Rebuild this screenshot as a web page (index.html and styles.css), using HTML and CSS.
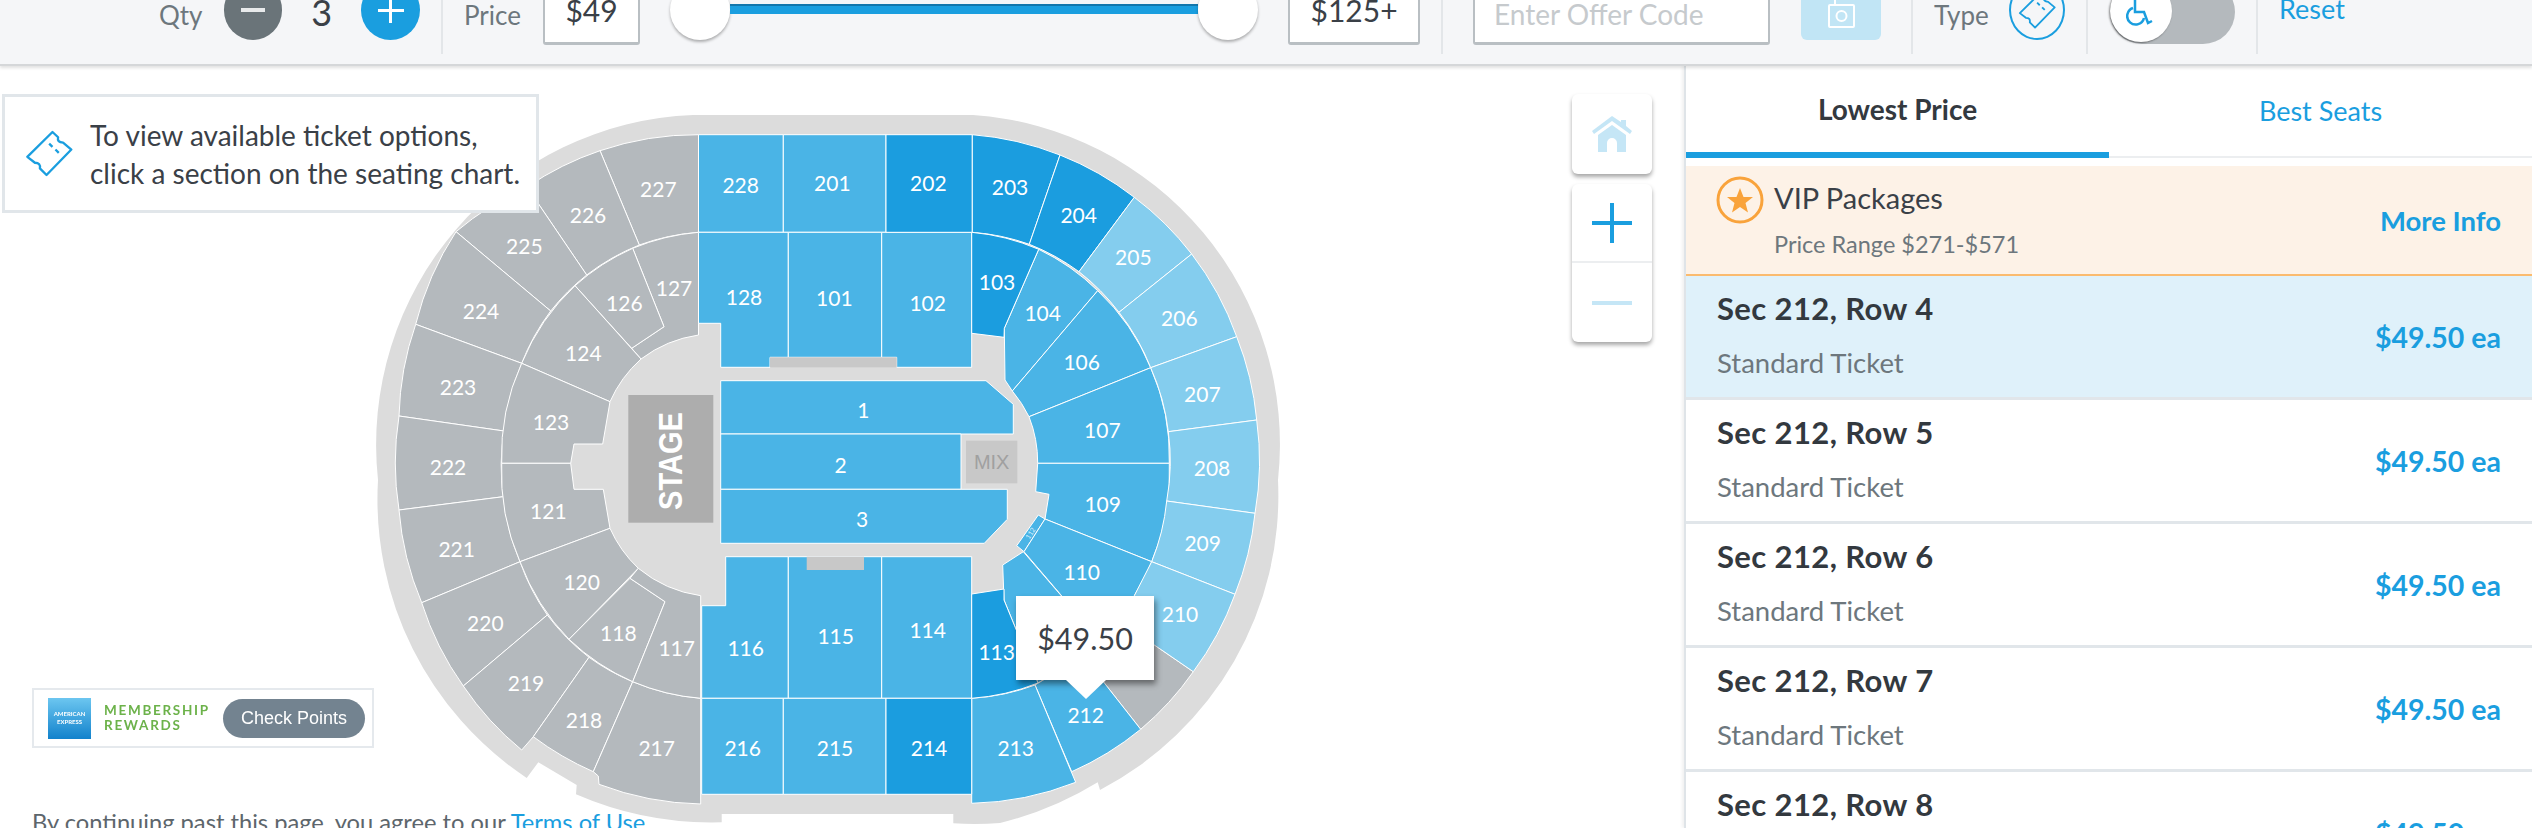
FILE: index.html
```html
<!DOCTYPE html>
<html lang="en">
<head>
	<meta charset="UTF-8" />
	<title>Seat map</title>
	<link rel="stylesheet" href="styles.css">
</head>
<body>
<header class="filters">
	<div class="group group-qty">
		<span class="label">Qty</span>
		<span class="round round-minus"><span class="bar"></span></span>
		<span class="qty-value">3</span>
		<span class="round round-plus"><span class="cross"></span></span>
	</div>
	<div class="group group-price">
		<span class="label">Price</span>
		<span class="field field-min">$49</span>
		<div class="slider">
			<span class="handle"></span>
			<span class="track"></span>
			<span class="handle"></span>
		</div>
		<span class="field field-max">$125+</span>
	</div>
	<div class="group group-offer">
		<span class="field field-offer">Enter Offer Code</span>
		<span class="offer-btn">
			<svg width="32" height="30" viewBox="0 0 32 30"><path class="offer-line" d="M10 0V5M5 5H28A1 1 0 0 1 29 6V26A1 1 0 0 1 28 27H5A1 1 0 0 1 4 26V6A1 1 0 0 1 5 5Z"/><circle class="offer-line" cx="16.500" cy="16" r="5"/></svg>
		</span>
	</div>
	<div class="group group-type">
		<span class="label">Type</span>
		<span class="type-icon">
			<svg width="38" height="37" viewBox="20 20 145 140"><use href="#ticket"/></svg>
		</span>
	</div>
	<div class="group group-access">
		<div class="toggle">
			<span class="knob">
				<svg width="30" height="32" viewBox="0 0 30 32"><path class="wheel" d="M9 2V17H18L22 28L26 26M7 13A8.500 8.500 0 1 0 18 23"/></svg>
			</span>
		</div>
	</div>
	<a class="reset">Reset</a>
</header>

<main class="main">
	<section class="map">
		<svg class="seatmap" width="1684" height="762" viewBox="0 66 1684 762">
			<defs>
				<g id="ticket">
					<path class="ticket-line" d="M103 25L120 41Q116 56 135 57L160 78L85 155L65 135Q68 118 50 118L27 100Z"/>
					<path class="ticket-line" d="M93 60L103 70M112 78L122 88"/>
				</g>
			</defs>
			<path class="band" d="M693 115H973A330 330 0 0 1 1278 480A332 332 0 0 1 1100 790L1097.700 782.300A340 340 0 0 1 1000 823A340 340 0 0 1 953.300 823.300V814H721.700V822.300A340 340 0 0 1 576 794.300L576.700 785L538.300 762.300L526.700 778A335 335 0 0 1 378 480A330 330 0 0 1 693 115Z"/>

			<g class="grey">
				<path d="M698.500 134.700A300 300 0 0 0 600 150.700L639.300 245A220 220 0 0 1 698.500 232.300Z"/>
				<path d="M600 150.700A300 300 0 0 0 527 187L586.700 275A220 220 0 0 1 639.300 245Z"/>
				<path d="M527 187A300 300 0 0 0 456 231.700L550.700 311A220 220 0 0 1 586.700 275Z"/>
				<path d="M456 231.700A300 300 0 0 0 415.700 324.300L521.700 363.300A220 220 0 0 1 550.700 311Z"/>
				<path d="M415.700 324.300A300 300 0 0 0 399 416L504 431A220 220 0 0 1 521.700 363.300Z"/>
				<path d="M399 416A300 300 0 0 0 399 510L503.300 496.700A220 220 0 0 1 504 431Z"/>
				<path d="M399 510A300 300 0 0 0 421.700 602.700L520 561.700A220 220 0 0 1 503.300 496.700Z"/>
				<path d="M421.700 602.700A300 300 0 0 0 463.300 686L547.300 615A220 220 0 0 1 520 561.700Z"/>
				<path d="M463.300 686A300 300 0 0 0 521.700 750L533.300 736.700L589 657.300A220 220 0 0 1 547.300 615Z"/>
				<path d="M533.300 736.700A300 300 0 0 0 593.300 771.700L632.700 681.700A220 220 0 0 1 589 657.300Z"/>
				<path d="M593.300 771.700L598.300 776L599 784.300A300 300 0 0 0 700.700 804V698.300A220 220 0 0 1 632.700 681.700Z"/>
				<path d="M698.500 232.300A220 220 0 0 0 632.700 248.300L664 326.700L631.700 348.300L641 359A125 125 0 0 1 698.500 335Z"/>
				<path d="M632.700 248.300A220 220 0 0 0 575 285.700L631.700 348.300L664 326.700Z"/>
				<path d="M575 285.700A220 220 0 0 0 521.700 363.300L610 401.700A125 125 0 0 1 641 359Z"/>
				<path d="M521.700 363.300A220 220 0 0 0 501.700 463.300H570.700L574 444H602.700L610 401.700Z"/>
				<path d="M501.700 463.300A220 220 0 0 0 520 561.700L610 528.300L603.300 489.300H574L570.700 463.300Z"/>
				<path d="M520 561.700A220 220 0 0 0 569 639.300L638.300 568.300A125 125 0 0 1 610 528.300Z"/>
				<path d="M569 639.300A220 220 0 0 0 632.700 681.700L665 601.700L630 578.300Z"/>
				<path d="M632.700 681.700A220 220 0 0 0 700.700 698.300V595.700A125 125 0 0 1 638.300 568.300L630 578.300L665 601.700Z"/>
				<path d="M1193.300 671.700A300 300 0 0 1 1140.700 729.300L1080 652A125 125 0 0 0 1115 618Z"/>
			</g>

			<g class="mid">
				<path d="M698.500 134.700H783.300V232.300H698.500Z"/>
				<path d="M783.300 134.700H886V232.300H783.300Z"/>
				<path d="M698.500 232.300H788.300V357.300H770V367.300H720.700V323.300H698.500Z"/>
				<path d="M788.300 232.300H881.700V357.300H788.300Z"/>
				<path d="M881.700 232.300H971.700V367.300H896.700V357.300H881.700Z"/>
				<path d="M1038.700 249.300A220 220 0 0 1 1097.700 290.700L1012.300 391L1005 380L1004.300 328.300Z"/>
				<path d="M1097.700 290.700A220 220 0 0 1 1150.700 367.700L1029 416.700A125 125 0 0 0 1012.300 391Z"/>
				<path d="M1150.700 367.700A220 220 0 0 1 1169.300 463.300H1037.700A125 125 0 0 0 1029 416.700Z"/>
				<path d="M1037.700 463.300H1169.300A220 220 0 0 1 1151.700 561.700L1045 519L1049 494.300L1035.700 491.700Z"/>
				<path class="tiny" d="M1038.300 515L1045 519L1024 551.700L1016.700 545.700Z"/>
				<path d="M1045 519L1151.700 561.700A220 220 0 0 1 1134.300 595.700L1096 636L1024 551.700Z"/>
				<path d="M1023.300 551.700L1096 636A220 220 0 0 1 1038 683L1004 600L1002.700 565Z"/>
				<path d="M1140.700 729.300A300 300 0 0 1 1071.700 771.700L1035 685A220 220 0 0 0 1080 652Z"/>
				<path d="M971.700 698.300A220 220 0 0 0 1035 685L1075.700 782.300A300 300 0 0 1 971.700 803.300Z"/>
				<path d="M725.700 556.700H788.300V698.300H701.700V605.700H725.700Z"/>
				<path d="M788.300 556.700H881.700V698.300H788.300Z"/>
				<path d="M881.700 556.700H971.700V698.300H881.700Z"/>
				<path d="M701.700 698.300H783.300V794.300H701.700Z"/>
				<path d="M783.300 698.300H886V794.300H783.300Z"/>
				<path d="M720.700 380.700H986L1013.300 404.300V434H720.700Z"/>
				<path d="M720.700 434H961V489.300H720.700Z"/>
				<path d="M720.700 489.300H1007.300V519.300L984.300 543.300H720.700Z"/>
			</g>

			<g class="dark">
				<path d="M886 134.700H972.300V232.300H886Z"/>
				<path d="M972.300 134.700A300 300 0 0 1 1060 155L1029.300 244.300A220 220 0 0 0 972.300 232.300Z"/>
				<path d="M1060 155A300 300 0 0 1 1134.300 197.300L1079 271.700A220 220 0 0 0 1029.300 244.300Z"/>
				<path d="M971.700 232.300A220 220 0 0 1 1038.700 249.300L1004.300 328.300L1004 337.300L971.700 333.300Z"/>
				<path d="M971.700 594L1004 589V600L1038 683A220 220 0 0 1 971.700 698.300Z"/>
				<path d="M886 698.300H971.700V794.300H886Z"/>
			</g>

			<g class="light">
				<path d="M1134.300 197.300A300 300 0 0 1 1191.700 254L1119 312.300A220 220 0 0 0 1079 271.700Z"/>
				<path d="M1191.700 254A300 300 0 0 1 1236.700 336.700L1150.700 367.700A220 220 0 0 0 1119 312.300Z"/>
				<path d="M1236.700 336.700A300 300 0 0 1 1256.700 420L1168.300 431.700A220 220 0 0 0 1150.700 367.700Z"/>
				<path d="M1256.700 420A300 300 0 0 1 1255 513.300L1166.700 501A220 220 0 0 0 1168.300 431.700Z"/>
				<path d="M1255 513.300A300 300 0 0 1 1235 594.300L1151.700 561.700A220 220 0 0 0 1166.700 501Z"/>
				<path d="M1235 594.300A300 300 0 0 1 1193.300 671.700L1115 618L1134.300 595.700L1151.700 561.700Z"/>
			</g>

			<rect class="block" x="770" y="357.300" width="126.700" height="10"/>
			<rect class="block" x="806.700" y="556.700" width="57.300" height="13.300"/>
			<rect class="block" x="966" y="440.700" width="51.300" height="42.600"/>
			<rect class="stage" x="628.300" y="395" width="85" height="127.700"/>
			<text class="stage-name" transform="translate(682 461) rotate(-90)" textLength="98" lengthAdjust="spacingAndGlyphs">STAGE</text>
			<text class="mix-name" x="991.700" y="462">MIX</text>

			<g class="names">
				<text x="658.300" y="188.300">227</text>
				<text x="740.700" y="184">228</text>
				<text x="588" y="214.300">226</text>
				<text x="524.300" y="245.300">225</text>
				<text x="481" y="310">224</text>
				<text x="458" y="386">223</text>
				<text x="448" y="466.700">222</text>
				<text x="674" y="287.300">127</text>
				<text x="624.300" y="302">126</text>
				<text x="583.300" y="352">124</text>
				<text x="551" y="421">123</text>
				<text x="744" y="296.700">128</text>
				<text x="548.300" y="510">121</text>
				<text x="456.700" y="548.300">221</text>
				<text x="581.700" y="581">120</text>
				<text x="485.300" y="622.700">220</text>
				<text x="618.300" y="632">118</text>
				<text x="676.700" y="647.300">117</text>
				<text x="745.700" y="647.300">116</text>
				<text x="526" y="682.700">219</text>
				<text x="584" y="719.300">218</text>
				<text x="656.700" y="747.700">217</text>
				<text x="742.700" y="747.700">216</text>
				<text x="832.300" y="182.300">201</text>
				<text x="928.300" y="182.300">202</text>
				<text x="1010" y="186">203</text>
				<text x="1078.700" y="214.300">204</text>
				<text x="1133.300" y="256">205</text>
				<text x="1179.300" y="317.300">206</text>
				<text x="1202.300" y="393.300">207</text>
				<text x="1212" y="467.700">208</text>
				<text x="834.300" y="297.300">101</text>
				<text x="927.700" y="302">102</text>
				<text x="997" y="281">103</text>
				<text x="1042.700" y="312">104</text>
				<text x="1081.700" y="361">106</text>
				<text x="1102.300" y="429.300">107</text>
				<text x="863.300" y="409.300">1</text>
				<text x="840.700" y="464">2</text>
				<text x="862" y="518.300">3</text>
				<text x="1102.700" y="503.300">109</text>
				<text x="1202.700" y="542.700">209</text>
				<text x="1180" y="613.300">210</text>
				<text x="1081.700" y="571.700">110</text>
				<text x="996.700" y="651.700">113</text>
				<text x="927.700" y="629.300">114</text>
				<text x="835.700" y="635">115</text>
				<text x="835" y="747.700">215</text>
				<text x="929" y="747.700">214</text>
				<text x="1015.700" y="747.700">213</text>
				<text x="1085.700" y="714.300">212</text>
			</g>
			<text class="tiny-name" transform="translate(1030 533) rotate(-57)">112</text>
		</svg>

		<div class="hint">
			<svg class="hint-icon" width="48" height="47" viewBox="20 20 145 140"><use href="#ticket"/></svg>
			<p>To view available ticket options,<br>click a section on the seating chart.</p>
		</div>

		<div class="controls">
			<div class="ctrl">
				<svg width="40" height="36" viewBox="0 0 40 36"><path class="home-fill" d="M20 0L29 6V4H34V10L40 15L38 18L20 5L2 18L0 15ZM20 9L34 19V36H25V27A5 5 0 0 0 15 27V36H6V19Z"/></svg>
			</div>
			<div class="ctrl ctrl-zoom">
				<div class="zoom-cell"><span class="zoom-plus"></span></div>
				<div class="zoom-cell zoom-cell-off"><span class="zoom-minus"></span></div>
			</div>
		</div>

		<div class="price-tip">$49.50</div>

		<div class="rewards">
			<span class="amex">AMERICAN<br>EXPRESS</span>
			<span class="rewards-name">MEMBERSHIP<br>REWARDS</span>
			<span class="rewards-btn">Check Points</span>
		</div>

		<p class="terms">By continuing past this page, you agree to our <a>Terms of Use.</a></p>
	</section>

	<aside class="panel">
		<nav class="tabs">
			<a class="tab tab-active">Lowest Price</a>
			<a class="tab">Best Seats</a>
		</nav>
		<div class="vip">
			<svg class="vip-star" width="48" height="48" viewBox="0 0 48 48"><circle class="star-ring" cx="24" cy="24" r="22"/><path class="star-fill" d="M24 12L27.500 21H37L29.500 27L32 36.500L24 31L16 36.500L18.500 27L11 21H20.500Z"/></svg>
			<div class="vip-text">
				<div class="vip-title">VIP Packages</div>
				<div class="vip-range">Price Range $271-$571</div>
			</div>
			<a class="vip-more">More Info</a>
		</div>
		<div class="row row-active">
			<div class="row-info"><div class="row-title">Sec 212, Row 4</div><div class="row-sub">Standard Ticket</div></div>
			<div class="row-price">$49.50 ea</div>
		</div>
		<div class="row">
			<div class="row-info"><div class="row-title">Sec 212, Row 5</div><div class="row-sub">Standard Ticket</div></div>
			<div class="row-price">$49.50 ea</div>
		</div>
		<div class="row">
			<div class="row-info"><div class="row-title">Sec 212, Row 6</div><div class="row-sub">Standard Ticket</div></div>
			<div class="row-price">$49.50 ea</div>
		</div>
		<div class="row">
			<div class="row-info"><div class="row-title">Sec 212, Row 7</div><div class="row-sub">Standard Ticket</div></div>
			<div class="row-price">$49.50 ea</div>
		</div>
		<div class="row">
			<div class="row-info"><div class="row-title">Sec 212, Row 8</div><div class="row-sub">Standard Ticket</div></div>
			<div class="row-price">$49.50 ea</div>
		</div>
	</aside>
</main>
</body>
</html>
```

FILE: styles.css
```css
* {
	padding: 0;
	margin: 0;
	box-sizing: border-box;
}
html, body {
	width: 100%;
	height: 100%;
	overflow: hidden;
}
body {
	display: flex;
	flex-direction: column;
	background: #fff;
	color: #3a4047;
	font-family: Lato, "Open Sans", sans-serif;
}

/* top filter bar, scrolled a little past the top of the window */
.filters {
	flex: none;
	position: relative;
	z-index: 2;
	display: flex;
	align-items: flex-start;
	height: 66px;
	padding-left: 138px;
	background: #f5f6f8;
	border-bottom: 2px solid #d5d7d9;
	box-shadow: 0 2px 3px rgba(0, 0, 0, .12);
	overflow: hidden;
}
.group {
	flex: none;
	display: flex;
	align-items: center;
	height: 84px;
	margin-top: -30px;
	padding: 0 21px;
	border-right: 2px solid #e3e6e9;
}
.label {
	margin-top: 6px;
	font-size: 26px;
	color: #6d777d;
}
.round {
	display: flex;
	align-items: center;
	justify-content: center;
	width: 60px;
	height: 60px;
	margin-bottom: 4px;
	border-radius: 50%;
}
.round-minus { background: #6a7479; margin-left: 21px; }
.round-plus { background: #1a9edf; }
.bar {
	width: 24px;
	height: 4px;
	background: #e8eaeb;
}
.cross {
	width: 26px;
	height: 26px;
	background:
		linear-gradient(#fff, #fff) center / 3px 100% no-repeat,
		linear-gradient(#fff, #fff) center / 100% 3px no-repeat;
}
.qty-value {
	width: 80px;
	text-align: center;
	font-size: 36px;
}
.group-qty { width: 305px; }
.group-price { width: 1000px; }
.group-offer { width: 470px; padding-left: 30px; }
.group-type { width: 175px; }
.group-access { width: 170px; padding-left: 22px; }

.field {
	display: flex;
	align-items: center;
	justify-content: center;
	height: 60px;
	margin-top: 6px;
	padding-bottom: 10px;
	background: #fff;
	border: 2px solid #b9bfc3;
	border-bottom-width: 3px;
	border-radius: 3px;
	font-size: 30px;
	color: #3a4047;
}
.field-min { width: 98px; margin-left: 22px; }
.field-max { width: 133px; margin-left: 30px; }
.field-offer {
	width: 297px;
	justify-content: flex-start;
	padding: 0 0 2px 19px;
	color: #c6cacd;
	font-size: 28px;
}
.slider {
	display: flex;
	align-items: center;
	margin-left: 30px;
	margin-bottom: 4px;
}
.handle {
	width: 60px;
	height: 60px;
	background: #fff;
	border-radius: 50%;
	box-shadow: 0 2px 3px rgba(0, 0, 0, .3);
}
.track {
	width: 468px;
	height: 10px;
	margin-bottom: 2px;
	background: #1a9edf;
	border-top: 2px solid #1276ac;
}
.offer-btn {
	display: flex;
	align-items: flex-start;
	justify-content: center;
	width: 80px;
	height: 60px;
	margin: 0 0 4px 31px;
	padding-top: 20px;
	background: #c1e5f5;
	border-radius: 0 0 6px 6px;
}
.offer-line {
	fill: none;
	stroke: #fff;
	stroke-width: 2;
}
.type-icon {
	display: flex;
	align-items: center;
	justify-content: center;
	width: 60px;
	height: 60px;
	margin: 0 0 4px 20px;
	border: 2px solid #1a9edf;
	border-radius: 50%;
}
.toggle {
	width: 126px;
	height: 64px;
	background: #b4b9bd;
	border-radius: 32px;
}
.knob {
	display: flex;
	align-items: center;
	justify-content: center;
	width: 62px;
	height: 62px;
	background: #fff;
	border-radius: 50%;
	box-shadow: -1px 1px 2px rgba(0, 0, 0, .45);
}
.wheel {
	fill: none;
	stroke: #1a9edf;
	stroke-width: 2.500;
}
.reset {
	margin: -2px 0 0 21px;
	color: #1a9edf;
	font-size: 27px;
	line-height: 22px;
}

.main {
	flex: 1;
	display: flex;
	min-height: 0;
}

/* seat map, the svg uses page coordinates */
.map {
	position: relative;
	flex: none;
	display: flex;
	flex-direction: column;
	justify-content: flex-end;
	width: 1684px;
}
.seatmap {
	position: absolute;
	left: 0;
	top: 0;
}
.band { fill: #dcdcdc; }
.grey path, .mid path, .dark path, .light path {
	stroke: #fff;
	stroke-width: 1;
}
.grey path { fill: #b4b9bd; }
.mid path { fill: #4ab4e6; }
.dark path { fill: #1b9ddf; }
.light path { fill: #84cdee; }
.block { fill: #c8c8c8; }
.stage { fill: #adadad; }
.stage-name {
	fill: #fff;
	font: bold 33px "Liberation Sans", sans-serif;
	text-anchor: middle;
}
.mix-name {
	fill: #a0a0a0;
	font: 20px "Liberation Sans", sans-serif;
	text-anchor: middle;
	dominant-baseline: central;
}
.names text {
	fill: #fff;
	font-size: 21px;
	text-anchor: middle;
	dominant-baseline: central;
}
.tiny-name {
	fill: #d6effb;
	font-size: 7px;
	text-anchor: middle;
	dominant-baseline: central;
}
.ticket-line {
	fill: none;
	stroke: #1a9edf;
	stroke-width: 7;
	stroke-linejoin: round;
}

.hint {
	position: absolute;
	left: 2px;
	top: 28px;
	display: flex;
	align-items: center;
	width: 537px;
	height: 119px;
	padding-left: 20px;
	background: #fff;
	border: 3px solid #e1e6ea;
	font-size: 28px;
	line-height: 38px;
}
.hint-icon {
	flex: none;
	margin-right: 17px;
}

.controls {
	position: absolute;
	right: 32px;
	top: 28px;
	display: flex;
	flex-direction: column;
	gap: 10px;
}
.ctrl {
	display: flex;
	align-items: center;
	justify-content: center;
	width: 80px;
	height: 80px;
	background: #fff;
	border-radius: 6px;
	box-shadow: 0 3px 4px rgba(0, 0, 0, .35);
}
.home-fill { fill: #c5e6f6; }
.ctrl-zoom {
	flex-direction: column;
	height: 158px;
}
.zoom-cell {
	display: flex;
	align-items: center;
	justify-content: center;
	width: 100%;
	height: 77px;
}
.zoom-cell-off {
	height: 81px;
	border-top: 2px solid #eceef0;
}
.zoom-plus {
	width: 40px;
	height: 40px;
	background:
		linear-gradient(#1a9edf, #1a9edf) center / 4px 100% no-repeat,
		linear-gradient(#1a9edf, #1a9edf) center / 100% 4px no-repeat;
}
.zoom-minus {
	width: 40px;
	height: 4px;
	background: #c5e6f6;
}

.price-tip {
	position: absolute;
	left: 1016px;
	top: 530px;
	width: 138px;
	height: 84px;
	background: #fff;
	box-shadow: 2px 4px 6px rgba(0, 0, 0, .45);
	text-align: center;
	font-size: 30.500px;
	line-height: 84px;
}
.price-tip::after {
	content: "";
	position: absolute;
	left: 50px;
	top: 84px;
	border-style: solid;
	border-width: 19px 20px 0;
	border-color: #fff transparent transparent;
}

.rewards {
	position: absolute;
	left: 32px;
	top: 622px;
	display: flex;
	align-items: center;
	width: 342px;
	height: 60px;
	padding-left: 14px;
	background: #fff;
	border: 2px solid #e5e9ed;
	filter: blur(.5px);
}
.amex {
	flex: none;
	display: flex;
	align-items: center;
	justify-content: center;
	width: 43px;
	height: 41px;
	background: linear-gradient(#6cc6f0, #1282cc);
	color: #fff;
	font-size: 6px;
	line-height: 8px;
	text-align: center;
	font-weight: 700;
}
.rewards-name {
	flex: none;
	width: 108px;
	margin-left: 13px;
	color: #6cb24a;
	font-size: 13.500px;
	font-weight: 700;
	line-height: 15px;
	letter-spacing: 1.700px;
}
.rewards-btn {
	flex: none;
	display: flex;
	align-items: center;
	justify-content: center;
	width: 142px;
	height: 39px;
	margin-left: 11px;
	background: #738390;
	border-radius: 20px;
	color: #fff;
	font: 18px "Liberation Sans", sans-serif;
}

.terms {
	position: relative;
	margin: 0 0 -12px 32px;
	font-size: 23.700px;
	line-height: 36px;
	color: #5d666c;
}
.terms a { color: #1a9edf; }

/* ticket list */
.panel {
	flex: 1;
	min-width: 0;
	border-left: 2px solid #dfe4e8;
	box-shadow: -2px 0 3px rgba(0, 0, 0, .06);
	position: relative;
	overflow: hidden;
}
.tabs {
	display: flex;
	height: 92px;
	background: #fff;
	border-bottom: 2px solid #eceef0;
}
.tab {
	flex: 1;
	display: flex;
	align-items: center;
	justify-content: center;
	padding-bottom: 2px;
	color: #1a9edf;
	font-size: 27px;
}
.tab-active {
	padding-bottom: 0;
	border-bottom: 6px solid #1a9edf;
	margin-bottom: -2px;
	color: #33393f;
	font-size: 28px;
	font-weight: 700;
}
.vip {
	display: flex;
	align-items: flex-start;
	height: 110px;
	margin-top: 8px;
	padding: 10px 31px 0 30px;
	background: #fdf2e7;
	border-bottom: 2px solid #fbbb6e;
}
.vip-star { flex: none; }
.star-ring {
	fill: none;
	stroke: #f9a33b;
	stroke-width: 3;
}
.star-fill { fill: #f9a33b; }
.vip-text {
	flex: 1;
	margin-left: 10px;
}
.vip-title {
	font-size: 29px;
	line-height: 44px;
}
.vip-range {
	margin-top: 10px;
	font-size: 23.500px;
	line-height: 28px;
	color: #6d777d;
}
.vip-more {
	margin-top: 27px;
	color: #1a9edf;
	font-size: 27.500px;
	font-weight: 700;
	line-height: 36px;
}
.row {
	display: flex;
	align-items: center;
	justify-content: space-between;
	height: 124px;
	padding: 0 31px 0 31px;
	background: #fff;
	border-bottom: 3px solid #e1e6ea;
}
.row-active { background: #dff1fa; }
.row-info { margin-bottom: 3px; }
.row-title {
	font-size: 31px;
	font-weight: 700;
	line-height: 36px;
	letter-spacing: .4px;
	color: #33393f;
}
.row-sub {
	margin-top: 19px;
	font-size: 27.500px;
	line-height: 36px;
	color: #6d777d;
}
.row-price {
	color: #1a9edf;
	font-size: 28.500px;
	font-weight: 700;
}
```
